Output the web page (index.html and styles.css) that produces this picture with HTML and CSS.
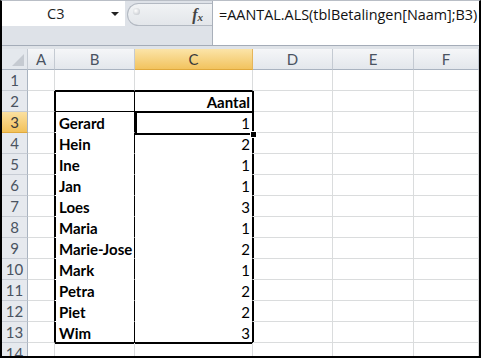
FILE: index.html
```html
<!DOCTYPE html>
<html>
<head>
<meta charset="utf-8">
<link rel="stylesheet" href="styles.css">
</head>
<body>
<div class="frame">
  <div class="fbar">
    <div class="namecol">
      <div class="namebox"><span class="ref">C3</span><span class="arrow"></span></div>
    </div>
    <div class="fxzone">
      <div class="fxpill"><span class="grip"></span><span class="fx">f<sub>x</sub></span></div>
    </div>
    <div class="formula">=AANTAL.ALS(tblBetalingen[Naam];B3)</div>
  </div>
  <div class="gap"></div>
  <div class="sheet">
    <div class="ch corner"><span class="tri"></span></div><div class="ch">A</div><div class="ch">B</div><div class="ch sel">C</div><div class="ch">D</div><div class="ch">E</div><div class="ch">F</div>

    <div class="rh">1</div><div class="c"></div><div class="c over"></div><div class="c over"></div><div class="c"></div><div class="c"></div><div class="c"></div>

    <div class="rh">2</div><div class="c tA"></div><div class="c tB first hdr"></div><div class="c tC first hdr num">Aantal</div><div class="c tD"></div><div class="c"></div><div class="c"></div>

    <div class="rh sel">3</div><div class="c tA"></div><div class="c tB">Gerard</div><div class="c tC num">1</div><div class="c tD"></div><div class="c"></div><div class="c"></div>

    <div class="rh">4</div><div class="c tA"></div><div class="c tB">Hein</div><div class="c tC num">2</div><div class="c tD"></div><div class="c"></div><div class="c"></div>

    <div class="rh">5</div><div class="c tA"></div><div class="c tB">Ine</div><div class="c tC num">1</div><div class="c tD"></div><div class="c"></div><div class="c"></div>

    <div class="rh">6</div><div class="c tA"></div><div class="c tB">Jan</div><div class="c tC num">1</div><div class="c tD"></div><div class="c"></div><div class="c"></div>

    <div class="rh">7</div><div class="c tA"></div><div class="c tB">Loes</div><div class="c tC num">3</div><div class="c tD"></div><div class="c"></div><div class="c"></div>

    <div class="rh">8</div><div class="c tA"></div><div class="c tB">Maria</div><div class="c tC num">1</div><div class="c tD"></div><div class="c"></div><div class="c"></div>

    <div class="rh">9</div><div class="c tA"></div><div class="c tB">Marie-Jose</div><div class="c tC num">2</div><div class="c tD"></div><div class="c"></div><div class="c"></div>

    <div class="rh">10</div><div class="c tA"></div><div class="c tB">Mark</div><div class="c tC num">1</div><div class="c tD"></div><div class="c"></div><div class="c"></div>

    <div class="rh">11</div><div class="c tA"></div><div class="c tB">Petra</div><div class="c tC num">2</div><div class="c tD"></div><div class="c"></div><div class="c"></div>

    <div class="rh">12</div><div class="c tA"></div><div class="c tB">Piet</div><div class="c tC num">2</div><div class="c tD"></div><div class="c"></div><div class="c"></div>

    <div class="rh">13</div><div class="c tA"></div><div class="c tB bot">Wim</div><div class="c tC bot num">3</div><div class="c tD"></div><div class="c"></div><div class="c"></div>

    <div class="rh">14</div><div class="c"></div><div class="c under"></div><div class="c under"></div><div class="c"></div><div class="c"></div><div class="c"></div>

    <div class="selection"><span class="handle"></span></div>
  </div>
</div>
</body>
</html>
```
FILE: styles.css
```css
html, body {
  margin: 0;
  padding: 0;
  background: #fff;
}
.frame {
  width: 481px;
  height: 358px;
  box-sizing: border-box;
  border: 2px solid #000;
  border-top: 1px solid #b9bec6;
  overflow: hidden;
  background: #dfe3e8;
  font-family: "Open Sans", "DejaVu Sans", sans-serif;
}
.fbar {
  display: flex;
  height: 44px;
  border-bottom: 1px solid #a4acb8;
}
.namecol {
  width: 123px;
  background: #dee2e8;
}
.namebox {
  height: 25px;
  background: #fff;
  position: relative;
  display: flex;
  align-items: center;
}
.ref {
  margin-left: 45px;
  font-size: 14.5px;
  color: #1e1e1e;
}
.arrow {
  margin-left: auto;
  margin-right: 6px;
  width: 0;
  height: 0;
  border-left: 4px solid transparent;
  border-right: 4px solid transparent;
  border-top: 4px solid #222;
}
.fxzone {
  width: 85px;
  background: #dee2e8;
  padding-top: 2px;
  padding-left: 2px;
}
.fxpill {
  height: 21px;
  border: 1px solid #b3b9c2;
  border-right: none;
  border-radius: 12px 0 0 12px;
  background: linear-gradient(#f1f3f5, #e3e6ea);
  display: flex;
  align-items: center;
  position: relative;
}
.grip {
  width: 7px;
  height: 7px;
  border-radius: 50%;
  background: radial-gradient(circle at 40% 40%, #fff, #b8bdc4);
  margin-left: 5px;
  margin-top: -6px;
}
.fx {
  margin-left: auto;
  margin-right: 9px;
  font-family: "Liberation Serif", serif;
  font-style: italic;
  font-weight: bold;
  font-size: 16px;
  color: #444;
}
.fx sub {
  font-size: 11px;
  vertical-align: -1px;
}
.formula {
  flex: 1;
  background: #fff;
  border-left: 1px solid #a9b0ba;
  padding-left: 6px;
  padding-top: 4px;
  font-size: 14.4px;
  color: #111;
  white-space: nowrap;
}
.gap {
  height: 3px;
  background: #dfe3e8;
}
.sheet {
  position: relative;
  display: grid;
  grid-template-columns: 26px 27px 80px 118px 80px 81px 65px;
  grid-auto-rows: 21px;
  background: #fff;
  font-family: "Lato", "Open Sans", sans-serif;
}
.ch, .rh, .c {
  box-sizing: border-box;
}
.ch {
  background: linear-gradient(#f5f6f8, #e3e7ec);
  border-right: 1px solid #c4cad2;
  border-bottom: 1px solid #a9b3c0;
  display: flex;
  align-items: center;
  justify-content: center;
  font-size: 15px;
  color: #4a5361;
}
.ch.sel {
  background: linear-gradient(#fbe4a8, #f2c35e);
  border-right-color: #e5b55a;
  border-bottom-color: #e0a93c;
  color: #3a3a3a;
}
.corner {
  position: relative;
  background: #e4e8ed;
}
.tri {
  position: absolute;
  right: 3px;
  bottom: 3px;
  width: 0;
  height: 0;
  border-left: 12px solid transparent;
  border-bottom: 12px solid #c5cad1;
}
.rh {
  background: #e6e9ee;
  border-right: 1px solid #a9b3c0;
  border-bottom: 1px solid #c7ccd4;
  display: flex;
  align-items: center;
  justify-content: center;
  font-size: 15px;
  color: #4a5361;
}
.rh.sel {
  background: linear-gradient(#fbe0a0, #f2c15a);
  border-bottom-color: #e0a93c;
  color: #3a3a3a;
}
.c {
  border-right: 1px solid #dadcdd;
  border-bottom: 1px solid #dadcdd;
  display: flex;
  align-items: center;
  font-size: 15px;
  font-weight: bold;
  color: #000;
  padding-left: 4px;
  padding-top: 2px;
  white-space: nowrap;
}
.num {
  justify-content: flex-end;
  padding-left: 0;
  padding-right: 2px;
  font-weight: normal;
}
.num.hdr {
  font-weight: bold;
}
.over {
  border-bottom-color: #000;
}
.tA {
  border-right-color: #000;
}
.tB {
  border-right-color: #000;
  border-bottom-color: #fff;
  box-shadow: inset 1px 0 0 #000;
}
.tC {
  border-right-color: #000;
  border-bottom-color: #fff;
}
.tD {
  box-shadow: inset 1px 0 0 #000;
}
.tB.first {
  box-shadow: inset 1px 1px 0 #000;
}
.tC.first {
  box-shadow: inset 0 1px 0 #000;
}
.hdr {
  border-bottom-color: #000;
}
.bot {
  border-bottom-color: #000;
}
.under {
  box-shadow: inset 0 1px 0 #000;
}
.selection {
  position: absolute;
  left: 133px;
  top: 62px;
  width: 119px;
  height: 24px;
  box-sizing: border-box;
  border: 2px solid #000;
}
.handle {
  position: absolute;
  right: -5px;
  bottom: -5px;
  width: 5px;
  height: 5px;
  background: #000;
  border: 1px solid #fff;
}
```
